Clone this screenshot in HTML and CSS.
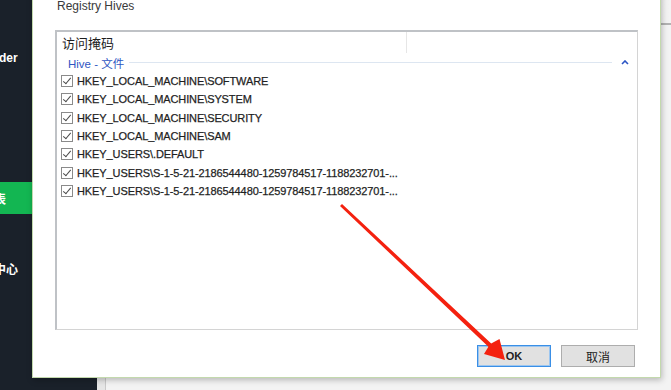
FILE: index.html
```html
<!DOCTYPE html>
<html>
<head>
<meta charset="utf-8">
<link rel="stylesheet" href="styles.css">
</head>
<body>
<div class="app">
  <aside class="sidebar">
    <div class="nav-item nav-first"><span class="nav-text t-der">der</span></div>
    <div class="nav-item nav-active"><span class="nav-text t-biao">表</span></div>
    <div class="nav-item nav-center"><span class="nav-text t-center">中心</span></div>
  </aside>
  <main class="main">
    <div class="main-header"></div>
    <div class="main-body">
      <div class="main-gutter"></div>
      <div class="main-content"></div>
    </div>
  </main>
</div>

<section class="dialog">
  <div class="dlg-label">Registry Hives</div>
  <div class="listbox">
    <div class="list-header">
      <div class="col col-1">访问掩码</div>
      <div class="col col-2"></div>
    </div>
    <div class="group">
      <span class="group-title">Hive - 文件</span>
      <span class="group-line"></span>
      <svg class="chevron" width="8" height="5" viewBox="0 0 8 5"><path d="M1 4 L4 1 L7 4" fill="none" stroke="#2b55c4" stroke-width="1.6"/></svg>
    </div>
    <div class="item"><span class="cb"></span><span class="item-text">HKEY_LOCAL_MACHINE\SOFTWARE</span></div>
    <div class="item"><span class="cb"></span><span class="item-text">HKEY_LOCAL_MACHINE\SYSTEM</span></div>
    <div class="item"><span class="cb"></span><span class="item-text">HKEY_LOCAL_MACHINE\SECURITY</span></div>
    <div class="item"><span class="cb"></span><span class="item-text">HKEY_LOCAL_MACHINE\SAM</span></div>
    <div class="item"><span class="cb"></span><span class="item-text">HKEY_USERS\.DEFAULT</span></div>
    <div class="item"><span class="cb"></span><span class="item-text">HKEY_USERS\S-1-5-21-2186544480-1259784517-1188232701-...</span></div>
    <div class="item"><span class="cb"></span><span class="item-text">HKEY_USERS\S-1-5-21-2186544480-1259784517-1188232701-...</span></div>
  </div>
  <div class="buttons">
    <button class="btn btn-ok">OK</button>
    <button class="btn">取消</button>
  </div>
</section>

<svg class="arrow" width="671" height="390" viewBox="0 0 671 390">
  <polygon points="342,204 491.2,343.4 499.5,339 505,360 484,354 488.4,346.8 340,206" fill="#f4210f"/>
</svg>
</body>
</html>
```

FILE: styles.css
```css
* { box-sizing: border-box; }
html, body { margin: 0; padding: 0; }
body {
  width: 671px;
  height: 390px;
  overflow: hidden;
  position: relative;
  background: #1a212a;
  font-family: "Liberation Sans", "Noto Sans CJK SC", sans-serif;
}
.app {
  display: flex;
  width: 671px;
  height: 390px;
}
.sidebar {
  width: 97px;
  background: #1a212a;
  display: flex;
  flex-direction: column;
  overflow: hidden;
}
.nav-item {
  height: 32px;
  display: flex;
  align-items: center;
  color: #ffffff;
  font-weight: bold;
  font-size: 12px;
  font-family: "Noto Sans CJK SC", "Liberation Sans", sans-serif;
  white-space: nowrap;
}
.nav-first { margin-top: 42px; }
.nav-active { margin-top: 108px; background: #13b652; }
.nav-center { margin-top: 38px; }
.t-der { margin-left: -1px; font-family: "Liberation Sans", sans-serif; font-size: 12px; }
.t-biao { margin-left: -6px; }
.t-center { margin-left: -6px; }

.main {
  flex: 1;
  background: #f1f1f1;
  display: flex;
  flex-direction: column;
}
.main-header {
  height: 25px;
  background: linear-gradient(to right, #e9e9e9, #f3f3f3);
  border-bottom: 2px solid #b2b2b2;
}
.main-body {
  flex: 1;
  display: flex;
}
.main-gutter {
  width: 9px;
  background: #e6e6e6;
  border-right: 1px solid #c9c9c9;
}
.main-content {
  flex: 1;
  background: #f3f3f3;
}

.dialog {
  position: absolute;
  left: 32px;
  top: -10px;
  width: 629px;
  height: 388px;
  background: #ffffff;
  border: 1px solid #c3d9ad;
  box-shadow: 1px 2px 6px rgba(0, 0, 0, 0.25);
  padding: 7px 22px 0 22px;
  display: flex;
  flex-direction: column;
}
.dlg-label {
  margin-left: 2px;
  font-size: 12px;
  line-height: 16px;
  color: #3a3a3a;
  font-family: "Liberation Sans", sans-serif;
}
.listbox {
  margin-top: 16px;
  height: 300px;
  border-top: 2px solid #bfc2c6;
  border-left: 2px solid #bfc2c6;
  border-right: 1px solid #d4d4d4;
  border-bottom: 1px solid #d4d4d4;
  display: flex;
  flex-direction: column;
}
.list-header {
  display: flex;
  height: 21px;
}
.col {
  font-family: "Noto Sans CJK SC", sans-serif;
  font-size: 13px;
  line-height: 21px;
  color: #1e1e1e;
}
.col-1 {
  width: 350px;
  padding-left: 5px;
  border-right: 1px solid #e6e6e6;
}
.col-2 { flex: 1; }
.group {
  height: 19px;
  display: flex;
  align-items: center;
  padding-left: 11px;
  padding-right: 8px;
}
.group-title {
  font-family: "Liberation Sans", "Noto Sans CJK SC", sans-serif;
  font-size: 11.5px;
  color: #2f56c2;
  white-space: nowrap;
}
.group-line {
  flex: 1;
  height: 1px;
  background: #dde6f1;
  margin: 0 9px 0 5px;
}
.chevron { display: block; }
.item {
  height: 18.33px;
  display: flex;
  align-items: center;
  padding-left: 4px;
}
.cb {
  width: 12px;
  height: 12px;
  border: 1px solid #8a8a8a;
  background: #ffffff;
  position: relative;
  margin-right: 4px;
  flex: none;
}
.cb::after {
  content: "";
  position: absolute;
  left: 3px;
  top: 0px;
  width: 3px;
  height: 7px;
  border-right: 1.5px solid #4a4a4a;
  border-bottom: 1.5px solid #4a4a4a;
  transform: rotate(40deg);
}
.item-text {
  font-size: 11px;
  letter-spacing: -0.1px;
  color: #1f1f1f;
  white-space: nowrap;
  -webkit-text-stroke: 0.25px #1f1f1f;
}
.buttons {
  margin-top: 15px;
  display: flex;
  justify-content: flex-end;
  gap: 10px;
  padding-right: 3px;
}
.btn {
  width: 74px;
  height: 22px;
  background: #e1e1e1;
  border: 1px solid #adadad;
  font-family: "Noto Sans CJK SC", "Liberation Sans", sans-serif;
  font-size: 12px;
  color: #222;
  padding: 0;
}
.btn-ok {
  border: 1px solid #3a8fe6;
  box-shadow: inset 0 0 0 1px #9cc6f0;
  font-family: "Liberation Sans", sans-serif;
  font-weight: bold;
  font-size: 11px;
}
.arrow {
  position: absolute;
  left: 0;
  top: 0;
  pointer-events: none;
}
```
